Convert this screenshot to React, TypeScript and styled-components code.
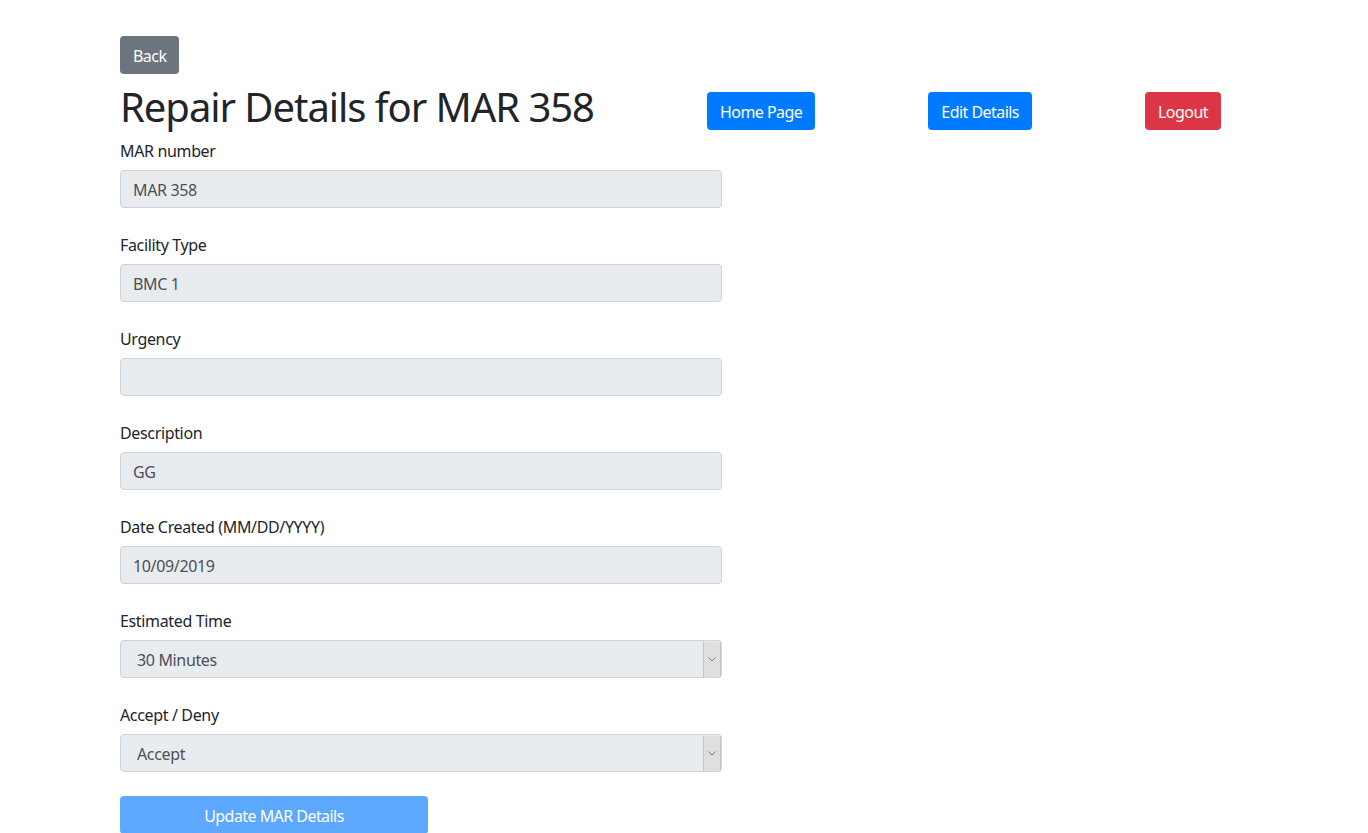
import React from "react";
import styled, { createGlobalStyle } from "styled-components";

const GlobalStyle = createGlobalStyle`
  html, body { margin: 0; padding: 0; background: #fff; }
  body {
    font-family: "Noto Sans", "Open Sans", sans-serif;
    color: #212529;
    font-size: 16px;
    line-height: 1.5;
    letter-spacing: -0.35px;
  }
  * { box-sizing: border-box; }
`;

const Page = styled.div`
  padding: 36px 0 0 120px;
  width: 1368px;
`;

const Button = styled.button<{ $variant: "secondary" | "primary" | "danger" | "disabled" }>`
  font-family: inherit;
  font-size: 16px;
  letter-spacing: -0.55px;
  line-height: 24px;
  padding: 7px 12px 5px;
  border-radius: 4px;
  border: 1px solid transparent;
  color: #fff;
  cursor: pointer;
  background: ${(p) =>
    p.$variant === "secondary"
      ? "#6c757d"
      : p.$variant === "danger"
      ? "#dc3545"
      : p.$variant === "disabled"
      ? "#5ca8ff"
      : "#007bff"};
`;

const HeaderRow = styled.div`
  display: flex;
  justify-content: space-between;
  align-items: flex-end;
  width: 1101px;
  margin-top: 8px;
`;

const Title = styled.h1`
  margin: 0 0 8px;
  padding-top: 1px;
  height: 48px;
  font-size: 40px;
  font-weight: 400;
  line-height: 48px;
  letter-spacing: -1.05px;
`;

const HeaderButton = styled(Button)`
  margin-bottom: 8px;
`;

const Form = styled.form`
  width: 602px;
`;

const Group = styled.div`
  margin-bottom: 24px;
  display: flex;
  flex-direction: column;
`;

const Label = styled.label`
  display: block;
  margin-bottom: 8px;
  padding-top: 1px;
  height: 24px;
  font-size: 16px;
  line-height: 24px;
`;

const Field = styled.div<{ $select?: boolean }>`
  height: 38px;
  background: #e9ecef;
  border: 1px solid #ced4da;
  border-radius: 4px;
  color: #495057;
  font-size: 16px;
  line-height: 24px;
  padding: 7px 12px 5px ${(p) => (p.$select ? "16px" : "12px")};
  display: flex;
  align-items: center;
  justify-content: space-between;
  position: relative;
`;

const Arrow = styled.span`
  position: absolute;
  top: 1px;
  right: 0;
  bottom: 0;
  width: 18px;
  background: #dfdfdf;
  border-left: 1px solid #c6c6c6;
  border-right: 1px solid #c6c6c6;
  display: flex;
  align-items: center;
  justify-content: center;
`;

const SubmitButton = styled(Button)`
  width: 308px;
  height: 38px;
`;

const fields: { label: string; value: string; select?: boolean }[] = [
  { label: "MAR number", value: "MAR 358" },
  { label: "Facility Type", value: "BMC 1" },
  { label: "Urgency", value: "" },
  { label: "Description", value: "GG" },
  { label: "Date Created (MM/DD/YYYY)", value: "10/09/2019" },
  { label: "Estimated Time", value: "30 Minutes", select: true },
  { label: "Accept / Deny", value: "Accept", select: true },
];

export default function App() {
  return (
    <>
      <GlobalStyle />
      <Page>
        <Button $variant="secondary">Back</Button>
        <HeaderRow>
          <Title>Repair Details for MAR 358</Title>
          <HeaderButton $variant="primary">Home Page</HeaderButton>
          <HeaderButton $variant="primary">Edit Details</HeaderButton>
          <HeaderButton $variant="danger">Logout</HeaderButton>
        </HeaderRow>
        <Form>
          {fields.map((f) => (
            <Group key={f.label}>
              <Label>{f.label}</Label>
              <Field $select={f.select}>
                <span>{f.value}</span>
                {f.select && (
                  <Arrow>
                    <svg width="8" height="5" viewBox="0 0 8 5">
                      <path d="M0.5 0.5 L4 4 L7.5 0.5" fill="none" stroke="#7a7a7a" strokeWidth="1" />
                    </svg>
                  </Arrow>
                )}
              </Field>
            </Group>
          ))}
          <SubmitButton $variant="disabled" type="button">Update MAR Details</SubmitButton>
        </Form>
      </Page>
    </>
  );
}
